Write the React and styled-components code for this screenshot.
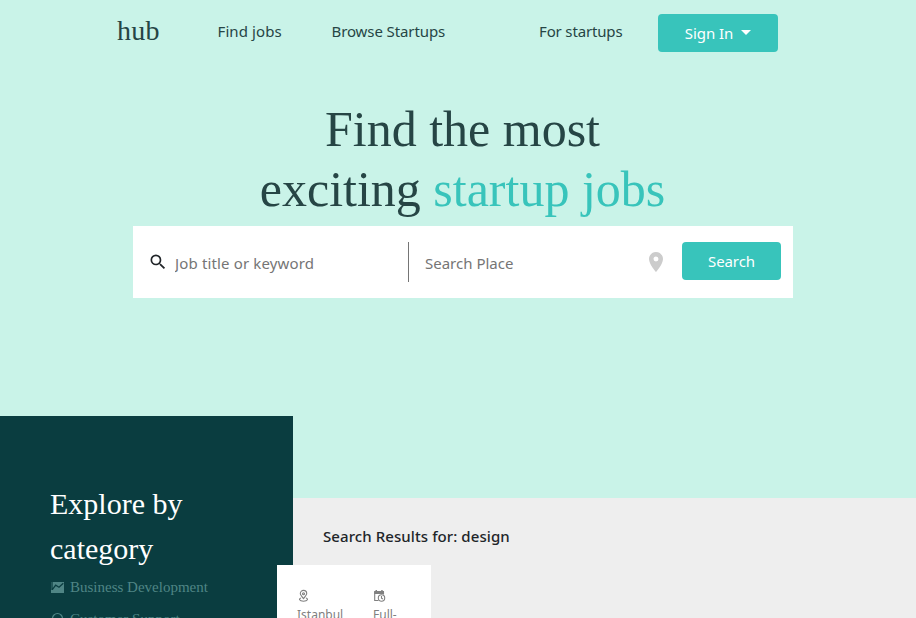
import React from "react";
import styled, { createGlobalStyle } from "styled-components";
import { MdSearch, MdLocationOn } from "react-icons/md";

const sans = '"Noto Sans", "Open Sans", sans-serif';
const serif = '"Liberation Serif", "Times New Roman", serif';

const GlobalStyle = createGlobalStyle`
  * { box-sizing: border-box; }
  html, body { margin: 0; height: 618px; overflow: hidden; background: #c9f3e8; }
  button, input { font: inherit; border: 0; margin: 0; padding: 0; }
`;

const Page = styled.div`
  height: 618px;
  overflow: hidden;
  display: flex;
  flex-direction: column;
  font-family: ${sans};
  font-size: 15px;
  color: #212529;
`;

const Hero = styled.header`
  height: 416px;
  flex: none;
`;

const Nav = styled.nav`
  height: 66px;
  width: 661px;
  margin-left: 117px;
  display: flex;
  align-items: center;
  color: #264545;
`;

const Logo = styled.a`
  width: 100.5px;
  padding-bottom: 4px;
  font: 28px/34px ${serif};
  letter-spacing: 0.3px;
`;

const NavLink = styled.a`
  width: ${(p) => p.$width}px;
  padding-bottom: 5px;
  line-height: 24px;
  letter-spacing: ${(p) => p.$spacing}px;
  white-space: nowrap;
`;

const Button = styled.button`
  width: ${(p) => p.$width}px;
  height: 38px;
  flex: none;
  display: flex;
  align-items: center;
  justify-content: center;
  gap: 8px;
  border-radius: 4px;
  background: #38c4bb;
  color: #fff;
  letter-spacing: ${(p) => p.$spacing}px;
`;

const Caret = styled.span`
  border: 5px solid transparent;
  border-top-color: #fff;
  border-bottom: 0;
  margin-bottom: 2px;
`;

const Title = styled.h1`
  margin: 33px 0 0 5px;
  padding-left: 4px;
  height: 127px;
  font: 400 50px/60px ${serif};
  text-align: center;
  color: #264545;
`;

const Accent = styled.span`
  color: #38c4bb;
`;

const SearchBar = styled.form`
  width: 660px;
  height: 72px;
  margin-left: 133px;
  padding: 16px 12px 16px 15px;
  display: flex;
  background: #fff;
`;

const Field = styled.label`
  width: ${(p) => p.$width}px;
  height: 40px;
  display: flex;
  align-items: center;
  padding-right: ${(p) => (p.$divided ? 0 : 14)}px;
  border-right: ${(p) => (p.$divided ? "1px solid #757575" : "0")};
  svg { flex: none; }
`;

const Input = styled.input`
  min-width: 0;
  flex: 1;
  height: 30px;
  margin: 1px 0 0 ${(p) => p.$indent}px;
  background: transparent;
  outline: 0;
  letter-spacing: ${(p) => p.$spacing}px;
  &::placeholder { color: #757575; opacity: 1; }
`;

const Lower = styled.main`
  flex: 1;
  display: flex;
`;

const Sidebar = styled.aside`
  width: 293px;
  height: 202px;
  flex: none;
  padding: 65px 50px 0;
  background: #0a3d40;
`;

const SideTitle = styled.h2`
  margin: 0;
  font: 400 30px/45px ${serif};
  color: #fff;
`;

const Category = styled.a`
  display: flex;
  align-items: center;
  height: 32px;
  gap: 5px;
  font: 15px/22px ${serif};
  color: #4f8585;
  white-space: nowrap;
`;

const Results = styled.section`
  flex: 1;
  height: 120px;
  margin-top: 82px;
  padding: 26px 0 0 30px;
  background: #eee;
`;

const ResultsTitle = styled.h3`
  margin: 0;
  height: 41px;
  font: 500 15px/24px ${sans};
  letter-spacing: 0.08px;
`;

const JobCard = styled.article`
  position: relative;
  width: 154px;
  height: 80px;
  margin-left: -46px;
  padding: 24px 20px;
  display: flex;
  background: #fff;
  color: #808080;
`;

const Detail = styled.div`
  width: 76px;
  flex: none;
  font-size: 12px;
  line-height: 24px;
  svg { display: block; }
`;

const ChartIcon = () => (
  <svg width="15" height="15" viewBox="0 0 15 15" fill="none">
    <path d="M1 2H14V13H1Z" fill="currentColor" />
    <path d="M2 2V10M2.300 9.700L5.700 5.200L9 7.200L13.300 3.200" stroke="#0a3d40" strokeWidth="1.300" />
  </svg>
);

const HeadsetIcon = () => (
  <svg width="15" height="15" viewBox="0 0 15 15" fill="none" stroke="currentColor" strokeWidth="1.200">
    <path d="M2.500 9V6.500a5 5 0 0 1 10 0V9M2 8h2v4H2zM11 8h2v4h-2z" />
  </svg>
);

const PinIcon = () => (
  <svg width="14" height="14" viewBox="0 0 14 14" fill="none" stroke="currentColor" strokeWidth="1.100">
    <path d="M6.500 9.700C4.400 7.200 3.300 5.800 3.300 4.600a3.200 3.200 0 0 1 6.400 0C9.700 5.800 8.600 7.200 6.500 9.700Z" />
    <circle cx="6.500" cy="4.700" r="1" />
    <path d="M4 9C1.500 9.700 2 12.200 6.500 12.200S11.500 9.700 9 9" />
  </svg>
);

const ScheduleIcon = () => (
  <svg width="14" height="14" viewBox="0 0 14 14" fill="none" stroke="currentColor" strokeWidth="1.100">
    <path d="M5.500 11.500H1.700V3H10.500V5.500" />
    <path d="M1.200 2H11V5H1.200ZM2.500 1H4V3H2.500ZM8.200 1H9.700V3H8.200Z" fill="currentColor" stroke="none" />
    <circle cx="8.500" cy="9" r="3.200" />
    <path d="M8.500 7V9.200L9.900 10" />
  </svg>
);

export default function App() {
  return (
    <Page>
      <GlobalStyle />
      <Hero>
        <Nav>
          <Logo>hub</Logo>
          <NavLink $width={114} $spacing={0.1}>Find jobs</NavLink>
          <NavLink $width={207.5} $spacing={-0.1}>Browse Startups</NavLink>
          <NavLink $width={119} $spacing={-0.15}>For startups</NavLink>
          <Button type="button" $width={120} $spacing={-0.05}>Sign In <Caret /></Button>
        </Nav>
        <Title>Find the most<br />exciting <Accent>startup jobs</Accent></Title>
        <SearchBar>
          <Field $width={261} $divided>
            <MdSearch size={20} />
            <Input $indent={7} $spacing={0.15} placeholder="Job title or keyword" />
          </Field>
          <Field $width={273}>
            <Input $indent={16} $spacing={0} placeholder="Search Place" />
            <MdLocationOn size={24} color="#ccc" />
          </Field>
          <Button type="button" $width={99} $spacing={-0.1}>Search</Button>
        </SearchBar>
      </Hero>
      <Lower>
        <Sidebar>
          <SideTitle>Explore by category</SideTitle>
          <Category><ChartIcon />Business Development</Category>
          <Category><HeadsetIcon />Customer Support</Category>
        </Sidebar>
        <Results>
          <ResultsTitle>Search Results for: design</ResultsTitle>
          <JobCard>
            <Detail><PinIcon />Istanbul</Detail>
            <Detail><ScheduleIcon />Full-<br />time</Detail>
          </JobCard>
        </Results>
      </Lower>
    </Page>
  );
}
